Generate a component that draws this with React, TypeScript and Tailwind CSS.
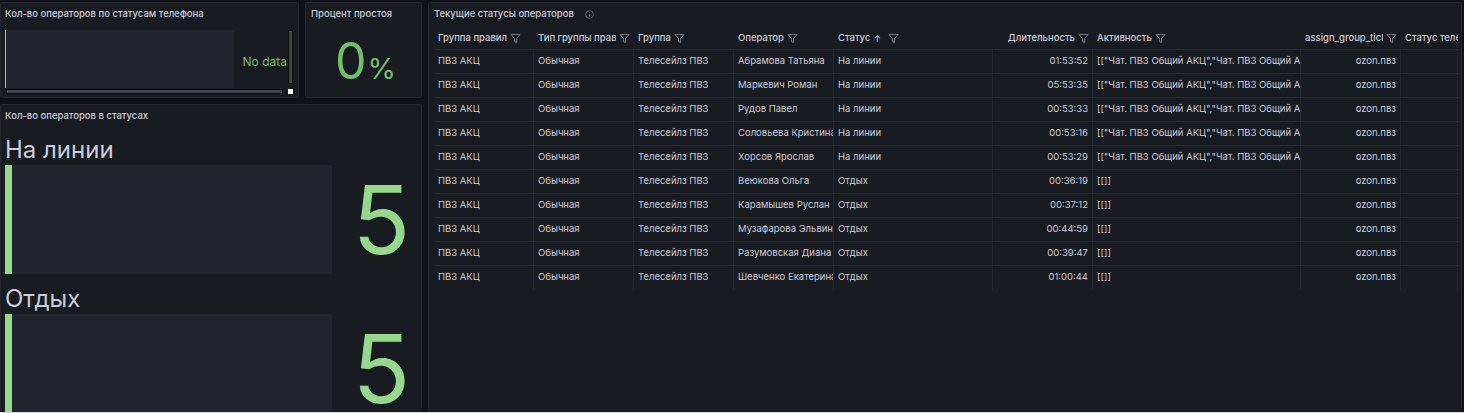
const columns = [
  { title: "Группа правил", width: "w-[100px]" },
  { title: "Тип группы правил", width: "w-[100px]" },
  { title: "Группа", width: "w-[100px]" },
  { title: "Оператор", width: "w-[100px]" },
  { title: "Статус", width: "w-[159px]", sorted: true },
  { title: "Длительность", width: "w-[100px]", right: true },
  { title: "Активность", width: "w-[208px]" },
  { title: "assign_group_ticket", width: "w-[100px]", right: true },
  { title: "Статус телефона", width: "w-[57px]", noFilter: true },
];

const active = '[["Чат. ПВЗ Общий АКЦ","Чат. ПВЗ Общий АКЦ"]]';

const rows = [
  ["Абрамова Татьяна", "На линии", "01:53:52", active],
  ["Маркевич Роман", "На линии", "05:53:35", active],
  ["Рудов Павел", "На линии", "00:53:33", active],
  ["Соловьева Кристина", "На линии", "00:53:16", active],
  ["Хорсов Ярослав", "На линии", "00:53:29", active],
  ["Веюкова Ольга", "Отдых", "00:36:19", "[[]]"],
  ["Карамышев Руслан", "Отдых", "00:37:12", "[[]]"],
  ["Музафарова Эльвина", "Отдых", "00:44:59", "[[]]"],
  ["Разумовская Диана", "Отдых", "00:39:47", "[[]]"],
  ["Шевченко Екатерина", "Отдых", "01:00:44", "[[]]"],
];

function FilterIcon() {
  return (
    <svg viewBox="0 0 12 12" className="h-[11px] w-[11px] shrink-0 text-[#8e9097]" fill="none" stroke="currentColor" strokeWidth="0.9">
      <path d="M1 1.5h10L7.2 6v4.6L4.8 9.3V6z" strokeLinejoin="round" />
    </svg>
  );
}

function Panel({ className, children }: { className: string; children: React.ReactNode }) {
  return <section className={`overflow-hidden rounded-[2px] border border-[#24262b] bg-[#181b1f] ${className}`}>{children}</section>;
}

function PanelTitle({ children }: { children: React.ReactNode }) {
  return <h2 className="text-[9.5px] font-medium leading-[12px] text-[#ccccdc]">{children}</h2>;
}

function Gauge({ label }: { label: string }) {
  return (
    <div className="h-[149px] shrink-0">
      <div className="h-[31px] pl-[4px] text-[24px] leading-[31px] text-[#ccccdc]">{label}</div>
      <div className="flex h-[109px]">
        <div className="ml-[4px] flex w-[327px] bg-[#22252b]">
          <div className="w-[7px] bg-[#96d98d]" />
        </div>
        <div className="flex w-[89px] items-center justify-center pb-[1px] pl-[10px] text-[95px] leading-none text-[#96d98d]">5</div>
      </div>
    </div>
  );
}

function HeaderCell({ col }: { col: (typeof columns)[number] }) {
  return (
    <div className={`flex h-[22px] shrink-0 items-center gap-[3px] overflow-hidden px-[4px] ${col.width} ${col.right ? "justify-end" : ""} ${col.noFilter ? "pr-0" : ""}`}>
      <span className="overflow-hidden whitespace-nowrap text-[9.5px] font-medium text-[#ccccdc]">{col.title}</span>
      {col.sorted && <span className="text-[9px] leading-none text-[#ccccdc]">↑</span>}
      {col.sorted && <span className="w-px" />}
      {!col.noFilter && <FilterIcon />}
    </div>
  );
}

function Cell({ width, right, children }: { width: string; right?: boolean; children?: React.ReactNode }) {
  return (
    <div className={`h-full shrink-0 overflow-hidden whitespace-nowrap border-r border-[#24262b] px-[4px] text-[9.5px] leading-[22px] text-[#ccccdc] ${width} ${right ? "text-right" : ""}`}>
      {children}
    </div>
  );
}

export default function App() {
  return (
    <main className="relative flex h-[413px] w-[1464px] gap-[6px] overflow-hidden bg-[#111217] font-['Inter',sans-serif]">
      <div className="flex w-[422px] shrink-0 flex-col gap-[6px] pt-[2px]">
        <div className="flex h-[96px] shrink-0 gap-[6px]">
          <Panel className="relative w-[299px] pl-[4px] pt-[5px]">
            <PanelTitle>Кол-во операторов по статусам телефона</PanelTitle>
            <div className="mt-[10px] flex h-[58px]">
              <div className="flex w-[229px] shrink-0 bg-[#22252b]">
                <div className="w-px bg-[#96d98d]" />
              </div>
              <div className="flex w-[53px] shrink-0 items-center justify-end whitespace-nowrap pt-[5px] text-[12px] text-[#73bf69]">No data</div>
            </div>
            <div className="absolute bottom-[3px] left-[5px] h-[5px] w-[277px] rounded-[1px] border border-[#0b0c0e] bg-[#42444b]" />
            <div className="absolute right-[5px] top-[27px] h-[54px] w-[5px] rounded-[1px] border border-[#0b0c0e] bg-[#42444b]" />
            <div className="absolute bottom-[3px] right-[5px] h-[5px] w-[5px] bg-white" />
          </Panel>
          <Panel className="flex-1 pl-[5px] pt-[5px]">
            <PanelTitle>Процент простоя</PanelTitle>
            <div className="mt-[13px] flex items-baseline justify-center pr-[1px] text-[#73bf69]">
              <span className="text-[50px] leading-[56px]">0</span>
              <span className="ml-[1px] text-[29px] leading-none">%</span>
            </div>
          </Panel>
        </div>
        <Panel className="flex-1 pt-[5px]">
          <div className="pl-[4px]">
            <PanelTitle>Кол-во операторов в статусах</PanelTitle>
          </div>
          <div className="mt-[12px]">
            <Gauge label="На линии" />
            <Gauge label="Отдых" />
          </div>
        </Panel>
      </div>

      <Panel className="mb-[-4px] mr-[2px] mt-[2px] flex-1 pl-[5px] pt-[5px]">
        <div className="flex h-[12px] items-center gap-[11px]">
          <PanelTitle>Текущие статусы операторов</PanelTitle>
          <svg viewBox="0 0 10 10" className="h-[9px] w-[9px] text-[#6e7076]" fill="none" stroke="currentColor" strokeWidth="0.9">
            <circle cx="5" cy="5" r="4.3" />
            <path d="M5 4.5v2.6M5 2.7v.9" />
          </svg>
        </div>
        <div className="mt-[7px] w-[1024px] overflow-hidden">
          <div className="flex border-b border-[#2b2d32]">
            {columns.map((col) => (
              <HeaderCell key={col.title} col={col} />
            ))}
          </div>
          {rows.map(([operator, status, duration, activity]) => (
            <div key={operator} className="flex h-[24px] border-b border-[#2b2d32] last:border-b-0">
              <Cell width={columns[0].width}>ПВЗ АКЦ</Cell>
              <Cell width={columns[1].width}>Обычная</Cell>
              <Cell width={columns[2].width}>Телесейлз ПВЗ</Cell>
              <Cell width={columns[3].width}>{operator}</Cell>
              <Cell width={columns[4].width}>{status}</Cell>
              <Cell width={columns[5].width} right>{duration}</Cell>
              <Cell width={columns[6].width}>{activity}</Cell>
              <Cell width={columns[7].width} right>ozon.пвз</Cell>
              <Cell width={columns[8].width} />
            </div>
          ))}
        </div>
      </Panel>

      {/* bottom edge of the capture */}
      <div className="absolute inset-x-0 bottom-0 h-px bg-[#d5d9de]" />
    </main>
  );
}
